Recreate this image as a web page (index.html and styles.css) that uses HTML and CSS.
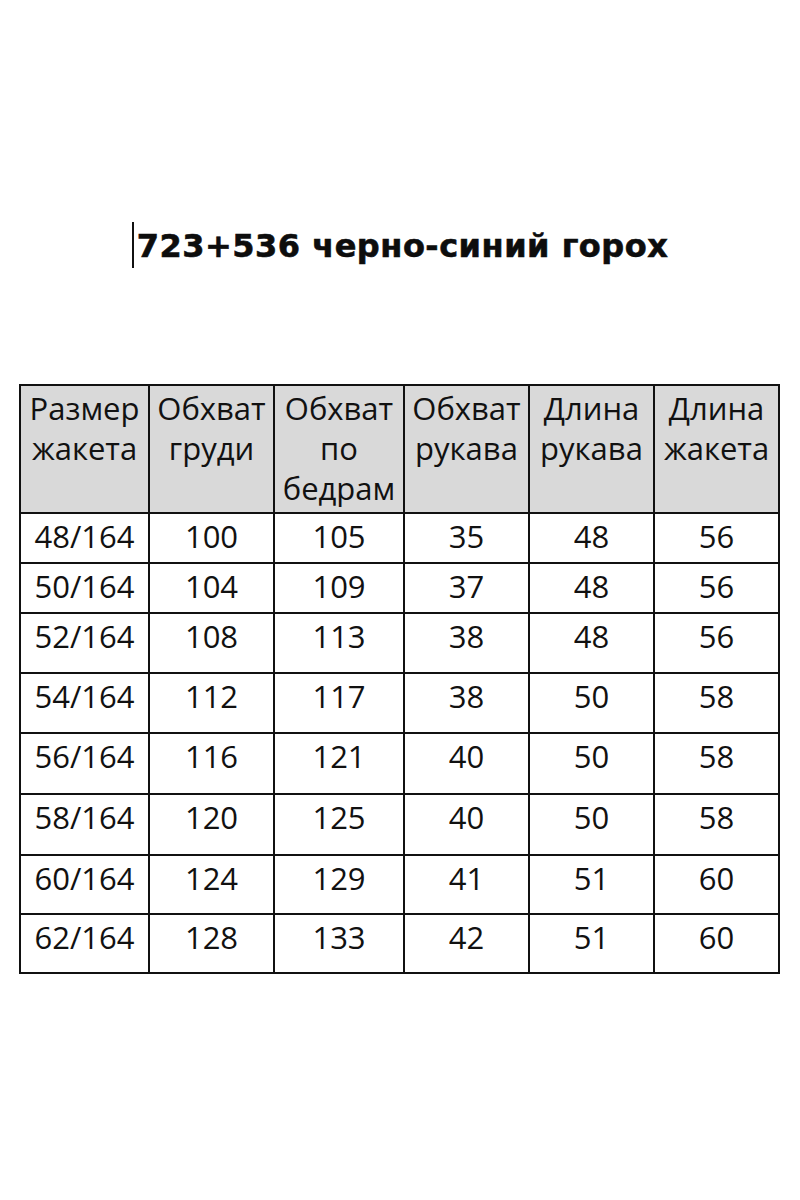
FILE: index.html
```html
<!DOCTYPE html>
<html lang="ru">
<head>
<meta charset="utf-8">
<title>723+536 черно-синий горох</title>
<link rel="stylesheet" href="styles.css">
</head>
<body>
<main class="page">
  <div class="title-row">
    <span class="cursor"></span>
    <h1 class="title">723+536 черно-синий горох</h1>
  </div>
  <table class="sizes">
    <colgroup>
      <col class="c1"><col class="c2"><col class="c3"><col class="c4"><col class="c5"><col class="c6">
    </colgroup>
    <thead>
      <tr class="head">
        <th>Размер<br>жакета</th>
        <th>Обхват<br>груди</th>
        <th>Обхват<br>по<br>бедрам</th>
        <th>Обхват<br>рукава</th>
        <th>Длина<br>рукава</th>
        <th>Длина<br>жакета</th>
      </tr>
    </thead>
    <tbody>
      <tr class="r50"><td>48/164</td><td>100</td><td>105</td><td>35</td><td>48</td><td>56</td></tr>
      <tr class="r50"><td>50/164</td><td>104</td><td>109</td><td>37</td><td>48</td><td>56</td></tr>
      <tr class="r60"><td>52/164</td><td>108</td><td>113</td><td>38</td><td>48</td><td>56</td></tr>
      <tr class="r60"><td>54/164</td><td>112</td><td>117</td><td>38</td><td>50</td><td>58</td></tr>
      <tr class="r61"><td>56/164</td><td>116</td><td>121</td><td>40</td><td>50</td><td>58</td></tr>
      <tr class="r61"><td>58/164</td><td>120</td><td>125</td><td>40</td><td>50</td><td>58</td></tr>
      <tr class="r59"><td>60/164</td><td>124</td><td>129</td><td>41</td><td>51</td><td>60</td></tr>
      <tr class="r59"><td>62/164</td><td>128</td><td>133</td><td>42</td><td>51</td><td>60</td></tr>
    </tbody>
  </table>
</main>
</body>
</html>
```

FILE: styles.css
```css
html, body {
  margin: 0;
  padding: 0;
  background: #ffffff;
}

.page {
  width: 800px;
  height: 1200px;
  padding-top: 222px;
  box-sizing: border-box;
}

.title-row {
  display: flex;
  justify-content: center;
  align-items: flex-start;
  height: 46px;
}

.cursor {
  width: 2px;
  height: 46px;
  background: #111111;
  margin-right: 3px;
}

.title {
  margin: 6px 0 0 0;
  font-family: "DejaVu Sans", "Liberation Sans", sans-serif;
  font-weight: bold;
  font-size: 32px;
  line-height: 37px;
  letter-spacing: 0.5px;
  color: #0d0d0d;
  -webkit-text-stroke: 0.6px #0d0d0d;
}

.sizes {
  margin: 116px 0 0 19px;
  width: 759px;
  border-collapse: collapse;
  table-layout: fixed;
  font-family: "Open Sans", "Noto Sans", sans-serif;
  font-size: 31px;
  line-height: 40px;
  color: #111111;
}

.c1 { width: 129px; }
.c2 { width: 125px; }
.c3 { width: 130px; }
.c4 { width: 125px; }
.c5 { width: 125px; }
.c6 { width: 125px; }

.sizes th,
.sizes td {
  border: 2px solid #111111;
  padding: 2px 0 0 0;
  text-align: center;
  vertical-align: top;
  font-weight: normal;
  white-space: nowrap;
}

.sizes th {
  background: #d9d9d9;
}

.head { height: 128px; }
.r50 { height: 50px; }
.r60 { height: 60px; }
.r61 { height: 61px; }
.r59 { height: 59px; }
```
